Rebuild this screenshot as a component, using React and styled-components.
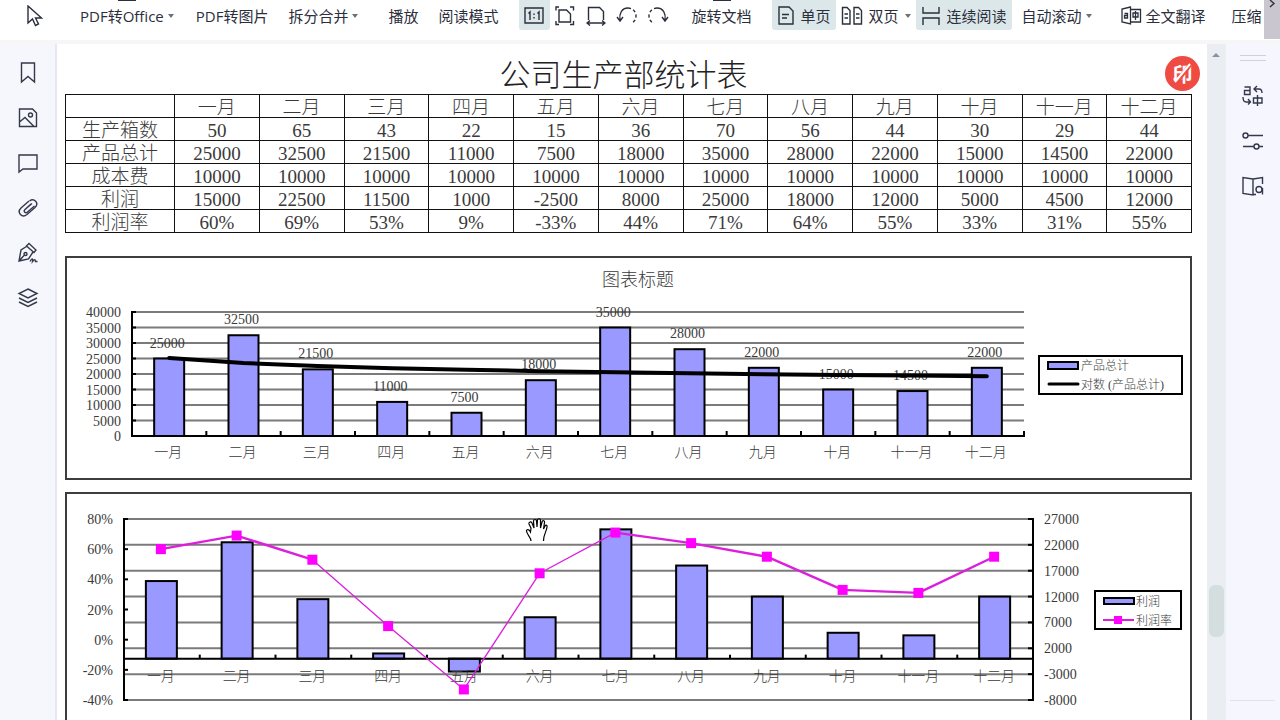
import React from "react";
import styled, { createGlobalStyle } from "styled-components";

const GlobalStyle = createGlobalStyle`
    * {
        box-sizing: border-box;
    }
    body {
        margin: 0;
        overflow: hidden;
        background: #fff;
        font-family: "Open Sans", "Noto Sans CJK SC", sans-serif;
        color: #2b2e3b;
    }
`;

const serif = `"Liberation Serif", "Noto Sans CJK SC", serif`;

/* ---------- toolbar ---------- */

const Toolbar = styled.header`
    display: flex;
    align-items: flex-start;
    height: 44px;
    border-bottom: 4px solid #f6f6f7;
    background: #fff;
`;

const Tools = styled.div`
    display: flex;
    flex: 1;
    min-width: 0;
    overflow: hidden;
    padding-left: 20px;
`;

const ToolGroup = styled.div`
    display: flex;
    flex: none;
    margin-left: ${(p) => p.$space || 0}px;
`;

const ToolButton = styled.button`
    position: relative;
    display: flex;
    flex: none;
    align-items: center;
    gap: ${(p) => (p.$compact ? 6 : 4)}px;
    height: 30px;
    padding: 2px ${(p) => (p.$compact ? 5 : 10)}px 0;
    border: 0;
    border-radius: 0 0 3px 3px;
    background: ${(p) => (p.$active ? "#dce7ea" : "transparent")};
    color: #2b2e3b;
    font: inherit;
    font-size: 15px;
    line-height: 24px;
    white-space: nowrap;
`;

const IconButton = styled(ToolButton)`
    justify-content: center;
    width: 31px;
    padding: 2px 0 0;
`;

const CutIcon = styled.span`
    position: absolute;
    top: 0;
    left: calc(50% - 9px);
    width: 18px;
    height: 1px;
    background: #2b2e3b;
`;

const Caret = styled.i`
    border: 3px solid transparent;
    border-top: 4px solid #6d7078;
    border-bottom: 0;
`;

const MoreButton = styled.button`
    display: flex;
    justify-content: center;
    width: 16px;
    height: 39px;
    padding: 0;
    border: 0;
    background: #cac6d0;
    color: #333;
`;

const Svg = styled.svg`
    display: block;
    flex: none;
    fill: none;
    stroke: currentColor;
    stroke-width: ${(p) => p.$stroke || 1.4};
`;

/* ---------- frame ---------- */

const Body = styled.div`
    display: flex;
    height: calc(100vh - 44px);
`;

const SideBar = styled.nav`
    display: flex;
    flex: none;
    flex-direction: column;
    width: 57px;
    padding-top: 6px;
    border-right: 2px solid #e6e8f0;
    background: #f5f7fd;
`;

const SideButton = styled.button`
    display: flex;
    align-items: center;
    justify-content: center;
    width: 100%;
    height: 45px;
    padding: 0;
    border: 0;
    background: none;
    color: #34384a;
`;

const RightBar = styled.aside`
    display: flex;
    flex: none;
    flex-direction: column;
    width: 55px;
    padding: 11px 2px 19px 2px;
    border-left: 1px solid #e9eef0;
    background: #f5f6fe;
`;

const Grip = styled.div`
    width: 26px;
    height: 6px;
    margin: 0 auto 12px;
    border: solid #cfd2db;
    border-width: 1px 0;
`;

const Rule = styled.div`
    height: 1px;
    margin: auto 3px 0 2px;
    background: #e2e3ea;
`;

const ScrollTrack = styled.div`
    display: flex;
    flex: none;
    flex-direction: column;
    align-items: center;
    width: 18px;
    background: #eaeef3;
`;

const ScrollUp = styled.i`
    margin-top: 9px;
    border: 4px solid transparent;
    border-top: 0;
    border-bottom: 4px solid #8b90a5;
`;

const ScrollSpace = styled.div`
    flex: ${(p) => p.$size};
`;

const ScrollThumb = styled.div`
    width: 15px;
    height: 52px;
    border-radius: 6px;
    background: #d5dedf;
`;

const Sheet = styled.main`
    position: relative;
    flex: 1;
    min-width: 0;
    overflow: hidden;
    padding: 12px 15px 0 8px;
    color: #3a3a3a;
    font-family: ${serif};
    font-weight: 300;
`;

const Title = styled.h1`
    margin: 0;
    padding: 2px 10px 0 0;
    color: #222;
    font-size: 31px;
    font-weight: 300;
    line-height: 36px;
    text-align: center;
`;

const PrintBadge = styled.button`
    position: absolute;
    top: 12px;
    right: 7px;
    width: 35px;
    height: 35px;
    padding: 0;
    border: 0;
    border-radius: 50%;
    background: #ef4b43;
    color: #fff;
    font: 700 20px/35px "Noto Sans CJK SC", sans-serif;

    svg {
        position: absolute;
        top: 0;
        left: 0;
    }
`;

const Table = styled.table`
    width: 100%;
    border-collapse: collapse;
    table-layout: fixed;
    font-size: 19px;
    line-height: 19px;

    th,
    td {
        height: 23px;
        padding: 3px 0 0;
        border: 1px solid #111;
        font-weight: 300;
        text-align: center;
    }

    th:first-child {
        width: 109px;
    }
`;

const ChartBox = styled.figure`
    position: relative;
    margin: ${(p) => p.$top}px 0 0;
    border: 2px solid #3d3d3d;

    > svg:first-child {
        display: block;
        width: 100%;
    }
`;

const Label = styled.text`
    fill: #3a3a3a;
    font-family: ${serif};
    font-size: ${(p) => p.$size || 14}px;
    font-weight: 300;
    text-anchor: ${(p) => p.$anchor || "middle"};
`;

const HandCursor = styled(Svg)`
    position: absolute;
    top: 24px;
    left: calc(41% - 2px);
`;

/* ---------- data ---------- */

const months = ["一月", "二月", "三月", "四月", "五月", "六月", "七月", "八月", "九月", "十月", "十一月", "十二月"];
const boxes = [50, 65, 43, 22, 15, 36, 70, 56, 44, 30, 29, 44];
const totals = [25000, 32500, 21500, 11000, 7500, 18000, 35000, 28000, 22000, 15000, 14500, 22000];
const profit = [15000, 22500, 11500, 1000, -2500, 8000, 25000, 18000, 12000, 5000, 4500, 12000];
const rates = [60, 69, 53, 9, -33, 44, 71, 64, 55, 33, 31, 55];

const rows = [
    ["生产箱数", boxes],
    ["产品总计", totals],
    ["成本费", months.map(() => 10000)],
    ["利润", profit],
    ["利润率", rates.map((r) => `${r}%`)],
];

/* ---------- icons ---------- */

const PointerIcon = () => (
    <Svg width="20" height="22" viewBox="0 0 20 22">
        <path d="M2 1v17l4.500-4 3 6.500 3-1.500-3-6h6z" />
    </Svg>
);

const ActualSizeIcon = () => (
    <Svg width="20" height="18" viewBox="0 0 20 18">
        <path d="M1 1h18v15H1zM4.500 6.500L6 5v8M13.500 6.500L15 5v8M10 6.500v1.500M10 10v1.500" />
    </Svg>
);

const FitPageIcon = () => (
    <Svg width="20" height="20" viewBox="0 0 20 20">
        <path d="M4 4h7.500l4 4v8H4zM1 4.500V1h3M15 1h3.500v3.500M1 15v3.500h3M15 18.500h3.500V15" />
    </Svg>
);

const FitWidthIcon = () => (
    <Svg width="20" height="20" viewBox="0 0 20 20">
        <path d="M2.500 14V1.500h11l4 4V14M1 17h18M4 14.500L1 17l3 2.500M16 14.500l3 2.500-3 2.500" />
    </Svg>
);

const RotateIcon = ({ right }) => (
    <Svg width="22" height="20" viewBox="0 0 22 20">
        <g transform={right ? "matrix(-1 0 0 1 22 0)" : undefined}>
            <path d="M4 14C3 8 5.500 2 12 2M1 11l3 4 3-4" />
            <path d="M12 2c5 0 8 4 8 8 0 3-1.500 5.500-4 7" strokeDasharray="3 2.500" />
        </g>
    </Svg>
);

const SinglePageIcon = () => (
    <Svg width="18" height="20" viewBox="0 0 18 20">
        <path d="M2 1h10l4 4v13H2zM5 8.500h7M5 12h5" />
    </Svg>
);

const DoublePageIcon = () => (
    <Svg width="22" height="20" viewBox="0 0 22 20">
        <path d="M1.500 1.500H6l3 3V18H1.500zM13 1.500h4.500l3 3V18H13zM3.500 8H7M3.500 12H7M15 8h3.500M15 12h3.500" />
    </Svg>
);

const ContinuousIcon = () => (
    <Svg width="20" height="20" viewBox="0 0 20 20">
        <path d="M2 1v6h16V1M2 19v-7h16v7" />
    </Svg>
);

const TranslateIcon = () => (
    <Svg width="22" height="20" viewBox="0 0 22 20" $stroke={1.3}>
        <path d="M10.500 1L2 3v13l8.500 2zM10.500 3.500h10V16h-10M13 7h5v4h-5zM15.500 5v9M4.500 7.500h3V12h-3v-2.500h3" />
    </Svg>
);

const BookmarkIcon = () => (
    <Svg width="22" height="24" viewBox="0 0 22 24">
        <path d="M4.500 2h13v19L11 15.500 4.500 21z" />
    </Svg>
);

const PictureIcon = () => (
    <Svg width="22" height="22" viewBox="0 0 22 22">
        <path d="M2.500 2h13l4 4v13.500h-17zM2.500 15L8 10.500l9 9" />
        <circle cx="13.500" cy="8" r="2" />
    </Svg>
);

const CommentIcon = () => (
    <Svg width="22" height="22" viewBox="0 0 22 22">
        <path d="M2 3h18v14H6l-4 3z" />
    </Svg>
);

const ClipIcon = () => (
    <Svg width="22" height="22" viewBox="0 0 22 22">
        <path d="M12 4L4 11c-4.500 4.500 1 10.500 6 6.500l8-7c4.500-4.500-1-10-5.500-6.500" />
        <path d="M15 6.500L8 12.500c-2 2 .5 4.500 2.500 2.500l7-6M8 12.500l6-5.500" />
    </Svg>
);

const PenIcon = () => (
    <Svg width="22" height="22" viewBox="0 0 22 22">
        <path d="M12 1.500l7 6.500-2 2.500-7.500-6.500zM9.500 4.500L4 8 2 19l9.500-2L16 10M2 19l5-5.500" />
        <circle cx="8.500" cy="12" r="1.500" />
        <path d="M13 19.500c2-3.500 3-3.500 2.500 0 2-2.500 3-2 3 0h2" />
    </Svg>
);

const LayersIcon = () => (
    <Svg width="22" height="22" viewBox="0 0 22 22">
        <path d="M11 2l9 4.500-9 4.500-9-4.500zM2 11l9 4.500 9-4.500M2 15l9 4.500 9-4.500" />
    </Svg>
);

const SwapLanguageIcon = () => (
    <Svg width="24" height="24" viewBox="0 0 24 24">
        <path d="M3.500 3h5.500v7.500H3.500V6.500H9M12.500 14h8.500v5h-8.500zM16.500 11v11M16 2l-3 3 3 3M13 5h5q3 0 3 4M2 13q0 5 3 5h4M7 15l2.500 3L7 20.500" />
    </Svg>
);

const SlidersIcon = () => (
    <Svg width="24" height="24" viewBox="0 0 24 24">
        <path d="M7 6.500h15M2 17.500h11M18 17.500h4" />
        <circle cx="4.500" cy="6.500" r="2.500" />
        <circle cx="15.500" cy="17.500" r="2.500" />
    </Svg>
);

const BookSearchIcon = () => (
    <Svg width="24" height="24" viewBox="0 0 24 24">
        <path d="M12 5L2 3.500v16L12 21zM12 5l9.500-1.500V10M12 20.500h3M21.500 14v6.500" />
        <circle cx="18" cy="15.500" r="3" />
    </Svg>
);

/* ---------- charts ---------- */

function TotalsChart() {
    const left = 65;
    const right = 957;
    const top = 54;
    const bottom = 178;
    const band = (right - left) / 12;
    const x = (i) => left + band * (i + 0.5);
    const y = (v) => bottom - (v / 40000) * (bottom - top);
    const steps = [0, 5000, 10000, 15000, 20000, 25000, 30000, 35000, 40000];
    const trend = months.map((_, i) => `${x(i)},${y(25200 - 2386 * Math.log(i + 1))}`).join(" ");

    return (
        <svg viewBox="0 0 1123 220" role="img" aria-label="图表标题">
            <Label x="571" y="28" $size={18}>图表标题</Label>
            {steps.map((v) => (
                <g key={v}>
                    <path d={`M${left} ${y(v)}H${right}`} stroke="#7b7b7b" strokeWidth="2" />
                    <path d={`M${left} ${y(v)}h4`} stroke="#000" strokeWidth="2" />
                    <Label x="54" y={y(v) + 5} $anchor="end">{v}</Label>
                </g>
            ))}
            {totals.map((v, i) => (
                <rect key={i} x={x(i) - 15} y={y(v)} width="30" height={bottom - y(v)} fill="#9999ff" stroke="#000" strokeWidth="2" />
            ))}
            <path d={`M${left} ${top - 1}V${bottom}H${right + 1}`} fill="none" stroke="#000" strokeWidth="2" />
            {months.map((m, i) => (
                <g key={m}>
                    <path d={`M${left + band * (i + 1)} ${bottom}v-5`} stroke="#000" strokeWidth="2" />
                    <Label x={x(i) - 1} y="199">{m}</Label>
                    <Label x={x(i) - 2} y={y(totals[i]) - 11}>{totals[i]}</Label>
                </g>
            ))}
            <polyline points={trend} fill="none" stroke="#000" strokeWidth="4" strokeLinecap="round" />
            <rect x="972" y="98" width="143" height="38" fill="#fff" stroke="#000" strokeWidth="2" />
            <rect x="981" y="104" width="30" height="7" fill="#9999ff" stroke="#000" strokeWidth="2" />
            <path d="M982 126h29" stroke="#000" strokeWidth="3" strokeLinecap="round" />
            <Label x="1014" y="112" $size={12} $anchor="start">产品总计</Label>
            <Label x="1014" y="131" $size={12} $anchor="start">对数 (产品总计)</Label>
        </svg>
    );
}

function ProfitChart() {
    const left = 57;
    const right = 966;
    const top = 25;
    const bottom = 206;
    const band = (right - left) / 12;
    const x = (i) => left + band * (i + 0.5);
    const yRate = (v) => top + ((80 - v) / 120) * (bottom - top);
    const yProfit = (v) => top + ((27000 - v) / 35000) * (bottom - top);
    const zero = yProfit(0);

    return (
        <svg viewBox="0 0 1123 260" role="img" aria-label="利润与利润率">
            {[27000, 22000, 17000, 12000, 7000, 2000, -3000, -8000].map((v) => (
                <g key={v}>
                    <path d={`M${left} ${yProfit(v)}H${right}`} stroke="#7b7b7b" strokeWidth="2" />
                    <path d={`M${right} ${yProfit(v)}h-5`} stroke="#000" strokeWidth="2" />
                    <Label x="977" y={yProfit(v) + 5} $anchor="start">{v}</Label>
                </g>
            ))}
            {[80, 60, 40, 20, 0, -20, -40].map((v) => (
                <g key={v}>
                    <path d={`M${left} ${yRate(v)}h4`} stroke="#000" strokeWidth="2" />
                    <Label x="46" y={yRate(v) + 5} $anchor="end">{v}%</Label>
                </g>
            ))}
            {profit.map((v, i) => (
                <rect
                    key={i}
                    x={x(i) - 16}
                    y={Math.min(yProfit(v), zero)}
                    width="31"
                    height={Math.abs(yProfit(v) - zero)}
                    fill="#9999ff"
                    stroke="#000"
                    strokeWidth="2"
                />
            ))}
            <path d={`M${left} ${top - 1}V${bottom + 1}M${left} ${zero}H${right}M${right} ${top - 1}V${bottom + 1}`} stroke="#000" strokeWidth="2" />
            {months.map((m, i) => (
                <g key={m}>
                    {i < 11 && <path d={`M${left + band * (i + 1)} ${zero}v-4`} stroke="#000" strokeWidth="2" />}
                    <Label x={x(i) - 1} y="187">{m}</Label>
                </g>
            ))}
            {rates.slice(1).map((r, i) => {
                const steep = Math.abs(yRate(r) - yRate(rates[i])) > 40;
                return (
                    <path
                        key={i}
                        d={`M${x(i) - 1} ${yRate(rates[i])}L${x(i + 1) - 1} ${yRate(r)}`}
                        stroke="#dc1fdc"
                        strokeWidth={steep ? 1.3 : 2.4}
                    />
                );
            })}
            {rates.map((r, i) => (
                <rect key={i} x={x(i) - 6} y={yRate(r) - 5} width="10" height="10" fill="#ff00ff" />
            ))}
            <rect x="1028" y="97" width="86" height="38" fill="#fff" stroke="#000" strokeWidth="2" />
            <rect x="1037" y="104" width="30" height="6" fill="#9999ff" stroke="#000" strokeWidth="2" />
            <path d="M1036 126h31" stroke="#dc1fdc" strokeWidth="2" />
            <rect x="1047" y="122" width="8" height="8" fill="#ff00ff" />
            <Label x="1069" y="112" $size={12} $anchor="start">利润</Label>
            <Label x="1069" y="131" $size={12} $anchor="start">利润率</Label>
        </svg>
    );
}

/* ---------- page ---------- */

const App = () => (
    <>
        <GlobalStyle />
        <Toolbar>
            <Tools>
                <IconButton aria-label="选择"><PointerIcon /></IconButton>
                <ToolGroup $space={19}>
                    <ToolButton><CutIcon />PDF转Office<Caret /></ToolButton>
                </ToolGroup>
                <ToolGroup $space={2}>
                    <ToolButton>PDF转图片</ToolButton>
                    <ToolButton>拆分合并<Caret /></ToolButton>
                </ToolGroup>
                <ToolGroup $space={10}>
                    <ToolButton>播放</ToolButton>
                    <ToolButton>阅读模式</ToolButton>
                </ToolGroup>
                <ToolGroup $space={10}>
                    <IconButton $active aria-label="实际大小"><ActualSizeIcon /></IconButton>
                    <IconButton aria-label="适合页面"><FitPageIcon /></IconButton>
                    <IconButton aria-label="适合宽度"><FitWidthIcon /></IconButton>
                    <IconButton aria-label="向左旋转"><RotateIcon /></IconButton>
                    <IconButton aria-label="向右旋转"><RotateIcon right /></IconButton>
                </ToolGroup>
                <ToolGroup $space={8}>
                    <ToolButton><CutIcon />旋转文档</ToolButton>
                </ToolGroup>
                <ToolGroup $space={10}>
                    <ToolButton $compact $active><SinglePageIcon />单页</ToolButton>
                    <ToolButton $compact><DoublePageIcon />双页<Caret /></ToolButton>
                    <ToolButton $compact $active><ContinuousIcon />连续阅读</ToolButton>
                    <ToolButton>自动滚动<Caret /></ToolButton>
                </ToolGroup>
                <ToolGroup $space={8}>
                    <ToolButton><TranslateIcon />全文翻译</ToolButton>
                </ToolGroup>
                <ToolGroup $space={6}>
                    <ToolButton>压缩</ToolButton>
                </ToolGroup>
            </Tools>
            <MoreButton aria-label="更多">
                <Svg width="10" height="10" viewBox="0 0 10 10"><path d="M3 0l4 3.500L3 7" /></Svg>
            </MoreButton>
        </Toolbar>
        <Body>
            <SideBar>
                <SideButton aria-label="书签"><BookmarkIcon /></SideButton>
                <SideButton aria-label="缩略图"><PictureIcon /></SideButton>
                <SideButton aria-label="批注"><CommentIcon /></SideButton>
                <SideButton aria-label="附件"><ClipIcon /></SideButton>
                <SideButton aria-label="签名"><PenIcon /></SideButton>
                <SideButton aria-label="图层"><LayersIcon /></SideButton>
            </SideBar>
            <Sheet>
                <Title>公司生产部统计表</Title>
                <PrintBadge>
                    印
                    <Svg width="35" height="35" viewBox="0 0 35 35">
                        <path d="M11 27L25 9" stroke="#ef4b43" strokeWidth="4" />
                        <path d="M10 26L25 8" stroke="#fff" strokeWidth="2" />
                    </Svg>
                </PrintBadge>
                <Table>
                    <thead>
                        <tr>
                            <th />
                            {months.map((m) => <th key={m} scope="col">{m}</th>)}
                        </tr>
                    </thead>
                    <tbody>
                        {rows.map(([name, values]) => (
                            <tr key={name}>
                                <th scope="row">{name}</th>
                                {values.map((v, i) => <td key={i}>{v}</td>)}
                            </tr>
                        ))}
                    </tbody>
                </Table>
                <ChartBox $top={23}>
                    <TotalsChart />
                </ChartBox>
                <ChartBox $top={12}>
                    <ProfitChart />
                    <HandCursor width="24" height="24" viewBox="0 0 24 24" $stroke={1.2}>
                        <path
                            d="M6 23c0-4-4-6-4.500-10 0-2 2.500-2 4 1L6 10 4 6c-.5-2 2-3 3-1l2 5-.5-7c0-2 3-2 3 0l.5 6 .5-7c0-1.500 3-1.500 3 0v8l1.500-6c.5-2 3-1.500 2.500.5L18.500 11l1.500-3c1-1.500 2.500-.5 2 1-.5 5-3.500 7-3.500 14"
                            fill="#fff"
                            stroke="#000"
                        />
                    </HandCursor>
                </ChartBox>
            </Sheet>
            <ScrollTrack>
                <ScrollUp />
                <ScrollSpace $size={528} />
                <ScrollThumb />
                <ScrollSpace $size={83} />
            </ScrollTrack>
            <RightBar>
                <Grip />
                <SideButton aria-label="翻译"><SwapLanguageIcon /></SideButton>
                <SideButton aria-label="设置"><SlidersIcon /></SideButton>
                <SideButton aria-label="查找"><BookSearchIcon /></SideButton>
                <Rule />
            </RightBar>
        </Body>
    </>
);

export default App;
